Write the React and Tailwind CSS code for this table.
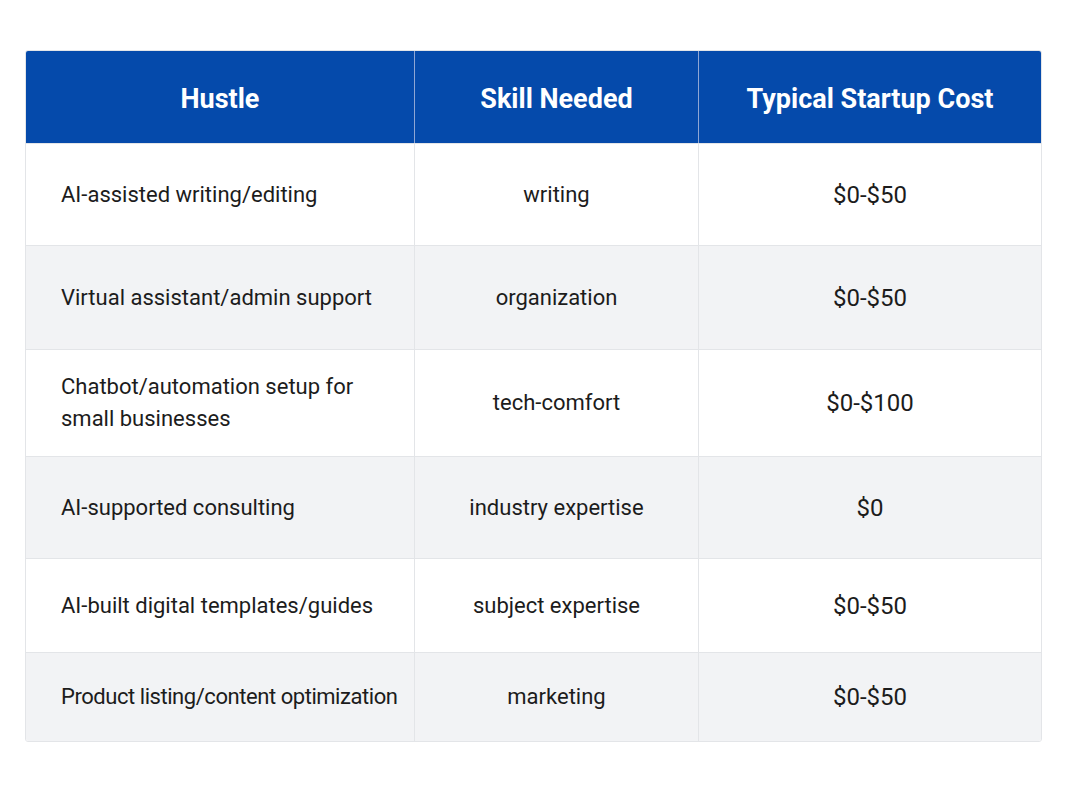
import React from "react";

const rows = [
  { h: "h-[102px]", bg: "bg-white", a: "AI-assisted writing/editing", b: "writing", c: "$0-$50" },
  { h: "h-[104px]", bg: "bg-[#f2f3f5]", a: "Virtual assistant/admin support", b: "organization", c: "$0-$50" },
  { h: "h-[107px]", bg: "bg-white", a: "Chatbot/automation setup for small businesses", b: "tech-comfort", c: "$0-$100" },
  { h: "h-[102px]", bg: "bg-[#f2f3f5]", a: "AI-supported consulting", b: "industry expertise", c: "$0" },
  { h: "h-[94px]", bg: "bg-white", a: "AI-built digital templates/guides", b: "subject expertise", c: "$0-$50" },
  { h: "h-[89px]", bg: "bg-[#f2f3f5]", a: "Product listing/content optimization", b: "marketing", c: "$0-$50" },
];

export default function App() {
  return (
    <div className="w-[1067px] h-[800px] bg-white pt-[50px] pl-[25px]" style={{ fontFamily: "Roboto, 'Liberation Sans', sans-serif" }}>
      <div className="w-[1017px] rounded-[3px] border border-[#e3e5e8] overflow-hidden">
        <div className="grid grid-cols-[389px_284px_1fr] h-[92px] bg-[#054aab] text-white font-bold text-[27px]">
          <div className="flex items-center justify-center pt-[4px] border-r border-[#8fa6d4]">Hustle</div>
          <div className="flex items-center justify-center pt-[4px] border-r border-[#8fa6d4]">Skill Needed</div>
          <div className="flex items-center justify-center pt-[4px]">Typical Startup Cost</div>
        </div>
        {rows.map((r, i) => (
          <div key={i} className={`grid grid-cols-[389px_284px_1fr] ${r.h} ${r.bg} text-[#1c1c1c] text-[22px] leading-[32px] border-t border-[#e3e5e8]`}>
            <div className="flex items-center pl-[35px] pr-[20px] border-r border-[#e3e5e8]">
              <span className={i === 5 ? "whitespace-nowrap tracking-[-0.45px]" : ""}>{r.a}</span>
            </div>
            <div className="flex items-center justify-center border-r border-[#e3e5e8]">{r.b}</div>
            <div className="flex items-center justify-center text-[24px]">{r.c}</div>
          </div>
        ))}
      </div>
    </div>
  );
}
